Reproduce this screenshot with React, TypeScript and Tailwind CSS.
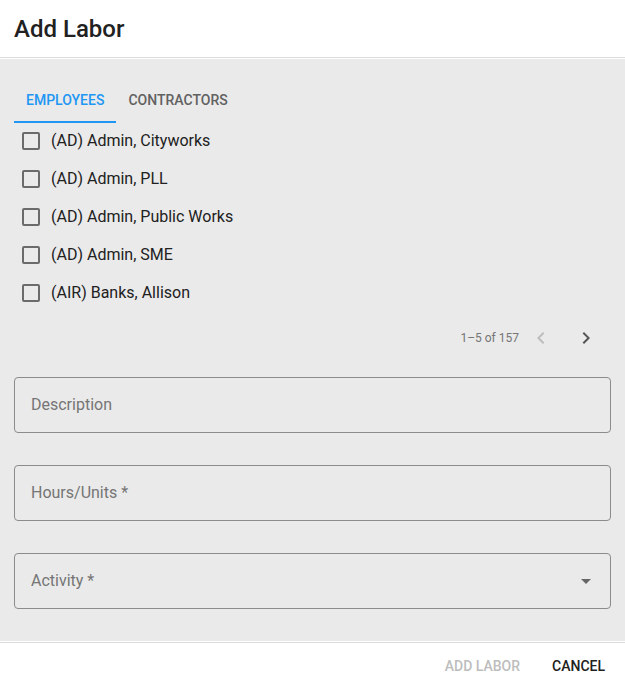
import { useState } from "react";

const EMPLOYEES = [
  "(AD) Admin, Cityworks",
  "(AD) Admin, PLL",
  "(AD) Admin, Public Works",
  "(AD) Admin, SME",
  "(AIR) Banks, Allison",
];

function Field({ label, select }: { label: string; select?: boolean }) {
  return (
    <div className="relative h-[56px] rounded-[4px] border border-[#8c8c8c] flex items-center pl-4 pr-[18px]">
      <span className="text-[16px] text-[#757575] flex-1">{label}</span>
      {select && (
        <svg width="10" height="5" viewBox="0 0 10 5" className="mr-[1px]">
          <path d="M0 0 L5 5 L10 0 Z" fill="#666" />
        </svg>
      )}
    </div>
  );
}

export default function App() {
  const [tab, setTab] = useState(0);
  const [checked, setChecked] = useState<boolean[]>(EMPLOYEES.map(() => false));

  return (
    <div className="w-[625px] h-[687px] bg-white flex flex-col" style={{ fontFamily: "Roboto, 'Liberation Sans', sans-serif" }}>
      {/* title */}
      <div className="h-[58px] shrink-0 flex items-center px-[14px] border-b border-[#dcdcdc]">
        <h1 className="text-[24px] font-medium text-[#212121] leading-none pt-[1px]">Add Labor</h1>
      </div>

      {/* content */}
      <div className="mt-[1px] flex-1 bg-[#eaeaea] px-[14px] pt-[16px] pb-[32px] flex flex-col">
        <div className="flex h-[48px]">
          {["Employees", "Contractors"].map((t, i) => (
            <button
              key={t}
              onClick={() => setTab(i)}
              className={`px-3 pt-[4px] uppercase text-[14px] font-medium border-b-2 ${
                tab === i ? "text-[#2196f3] border-[#2196f3]" : "text-[#616161] border-transparent"
              }`}
            >
              {t}
            </button>
          ))}
        </div>

        <div className="flex flex-col -mt-[1px]">
          {EMPLOYEES.map((name, i) => (
            <label key={name} className="h-[38px] flex items-center cursor-pointer">
              <span
                onClick={() => setChecked(c => c.map((v, j) => (j === i ? !v : v)))}
                className={`ml-[8px] w-[18px] h-[18px] rounded-[2px] border-2 ${
                  checked[i] ? "bg-[#2196f3] border-[#2196f3]" : "border-[#6b6b6b]"
                }`}
              />
              <span className="ml-[11px] text-[16px] text-[#212121]">{name}</span>
            </label>
          ))}
        </div>

        <div className="h-[50px] flex items-center justify-end mt-[1px]">
          <span className="text-[12px] text-[#757575] mr-[10px]">1–5 of 157</span>
          <button className="w-[24px] h-[24px] flex items-center justify-center mr-[21px]">
            <svg width="24" height="24" viewBox="0 0 24 24">
              <path d="M15.41 7.41 14 6l-6 6 6 6 1.41-1.41L10.83 12z" fill="#bdbdbd" />
            </svg>
          </button>
          <button className="w-[24px] h-[24px] flex items-center justify-center mr-[13px]">
            <svg width="24" height="24" viewBox="0 0 24 24">
              <path d="M10 6 8.59 7.41 13.17 12l-4.58 4.59L10 18l6-6z" fill="#555" />
            </svg>
          </button>
        </div>

        <div className="flex flex-col gap-[32px] mt-[14px]">
          <Field label="Description" />
          <Field label="Hours/Units *" />
          <Field label="Activity *" select />
        </div>
      </div>

      {/* actions */}
      <div className="mt-[1px] shrink-0 border-t border-[#dcdcdc] h-[46px] flex items-center justify-end pr-[12px] pt-[2px] gap-[16px]">
        <button disabled className="px-2 h-[36px] uppercase text-[14px] font-medium text-[#bdbdbd]">Add Labor</button>
        <button className="px-2 h-[36px] uppercase text-[14px] font-medium text-[#212121]">Cancel</button>
      </div>
    </div>
  );
}
